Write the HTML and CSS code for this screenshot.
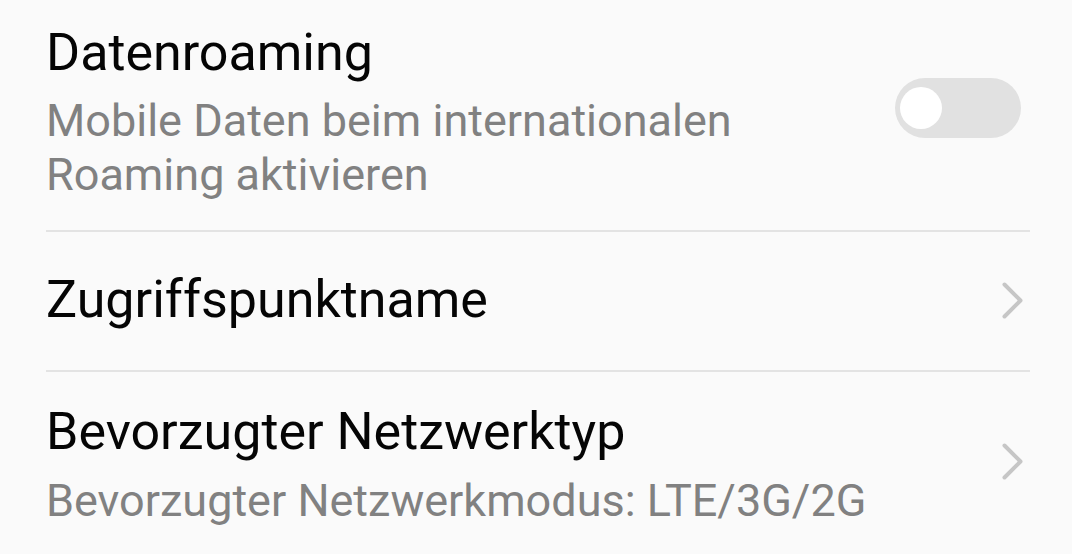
FILE: index.html
```html
<!DOCTYPE html>
<html lang="de">
<head>
<meta charset="utf-8">
<title>Mobile Daten</title>
<link rel="stylesheet" href="styles.css">
</head>
<body>
<div class="list">
  <div class="row row-roaming">
    <div class="texts">
      <div class="title">Datenroaming</div>
      <div class="summary">Mobile Daten beim internationalen<br>Roaming aktivieren</div>
    </div>
    <div class="switch"><div class="knob"></div></div>
  </div>
  <div class="row row-apn">
    <div class="texts">
      <div class="title">Zugriffspunktname</div>
    </div>
    <svg class="chevron" viewBox="0 0 21 37" width="21" height="37"><polyline points="2.5,2.5 18.5,18.5 2.5,34.5" fill="none" stroke="#c6c6c6" stroke-width="4" stroke-linecap="round" stroke-linejoin="round"/></svg>
  </div>
  <div class="row row-net">
    <div class="texts">
      <div class="title">Bevorzugter Netzwerktyp</div>
      <div class="summary summary-net">Bevorzugter Netzwerkmodus: LTE/3G/2G</div>
    </div>
    <svg class="chevron chevron-net" viewBox="0 0 21 37" width="21" height="37"><polyline points="2.5,2.5 18.5,18.5 2.5,34.5" fill="none" stroke="#c6c6c6" stroke-width="4" stroke-linecap="round" stroke-linejoin="round"/></svg>
  </div>
</div>
</body>
</html>
```
FILE: styles.css
```css
html, body {
  margin: 0;
  padding: 0;
  background: #fafafa;
}
body {
  font-family: Roboto, "Noto Sans", sans-serif;
  width: 1072px;
  height: 554px;
  overflow: hidden;
}
.list {
  padding: 0 42px 0 46px;
}
.row {
  display: flex;
  align-items: center;
  justify-content: space-between;
}
.row-roaming {
  padding: 23px 0 28px;
  border-bottom: 2px solid #e3e3e3;
}
.row-apn {
  padding: 38px 0 40px;
  border-bottom: 2px solid #e3e3e3;
}
.row-net {
  padding: 30px 0 0;
  align-items: flex-start;
}
.texts {
  display: flex;
  flex-direction: column;
}
.title {
  font-size: 52px;
  line-height: 60px;
  color: #050505;
}
.summary {
  font-size: 45px;
  line-height: 54px;
  color: #818181;
  margin-top: 11px;
}
.summary-net {
  margin-top: 12px;
}
.switch {
  width: 126px;
  height: 60px;
  border-radius: 30px;
  background: #e1e1e1;
  margin: 0 9px 10px 0;
  display: flex;
  align-items: center;
  padding-left: 5px;
  box-sizing: border-box;
}
.knob {
  width: 42px;
  height: 42px;
  border-radius: 50%;
  background: #ffffff;
}
.chevron {
  margin-right: 7px;
}
.chevron-net {
  margin-top: 41px;
}
```
